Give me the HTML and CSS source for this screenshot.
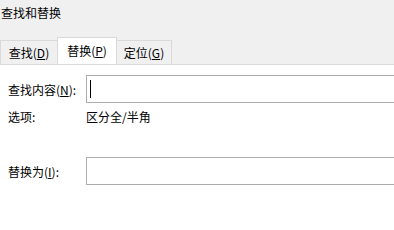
FILE: index.html
```html
<!DOCTYPE html>
<html lang="zh-CN">
<head>
    <meta charset="UTF-8">
    <title>查找和替换</title>
    <link rel="stylesheet" href="styles.css">
</head>
<body>
    <div class="title">查找和替换</div>
    <div class="tabs">
        <div class="tab tab-find">查找(<u>D</u>)</div>
        <div class="tab tab-replace active">替换(<u>P</u>)</div>
        <div class="tab tab-goto">定位(<u>G</u>)</div>
    </div>
    <div class="panel">
        <div class="row row-find">
            <div class="label">查找内容(<u>N</u>):</div>
            <div class="field"><span class="caret"></span></div>
        </div>
        <div class="row row-options">
            <div class="label">选项:</div>
            <div class="value">区分全/半角</div>
        </div>
        <div class="row row-replace">
            <div class="label">替换为(<u>I</u>):</div>
            <div class="field"></div>
        </div>
    </div>
</body>
</html>
```

FILE: styles.css
```css
body {
    margin: 0;
    background: #f0f0f0;
    font-family: "Noto Sans CJK SC", "Noto Sans", sans-serif;
    font-size: 12px;
    color: #000;
    overflow: hidden;
}

.title {
    height: 37px;
    line-height: 26px;
    padding-left: 1px;
}

.tabs {
    display: flex;
    align-items: flex-end;
    height: 27px;
}

.tab {
    box-sizing: border-box;
    height: 24px;
    line-height: 23px;
    text-align: center;
    border: 1px solid #d9d9d9;
    border-bottom: none;
    background: #f0f0f0;
}

.tab u {
    text-underline-offset: 1px;
}

.tab-find {
    width: 57px;
    border-right: none;
}

.tab-replace {
    width: 60px;
}

.tab-goto {
    width: 55px;
    border-left: none;
}

.tab.active {
    height: 27px;
    line-height: 26px;
    background: #fff;
    padding-bottom: 2px;
}

.panel {
    background: #fff;
    border-top: 1px solid #d9d9d9;
    height: 155px;
    padding: 10px 0 0 8px;
}

.row {
    display: flex;
    align-items: center;
}

.label {
    width: 78px;
    flex-shrink: 0;
}

.field {
    box-sizing: border-box;
    width: 320px;
    height: 28px;
    border: 1px solid #acacac;
    background: #fff;
    position: relative;
    flex-shrink: 0;
}

.caret {
    position: absolute;
    left: 3px;
    top: 4px;
    width: 1px;
    height: 18px;
    background: #000;
}

.row-options {
    margin-top: 6px;
    line-height: 16px;
}

.row-replace {
    margin-top: 32px;
}
```
